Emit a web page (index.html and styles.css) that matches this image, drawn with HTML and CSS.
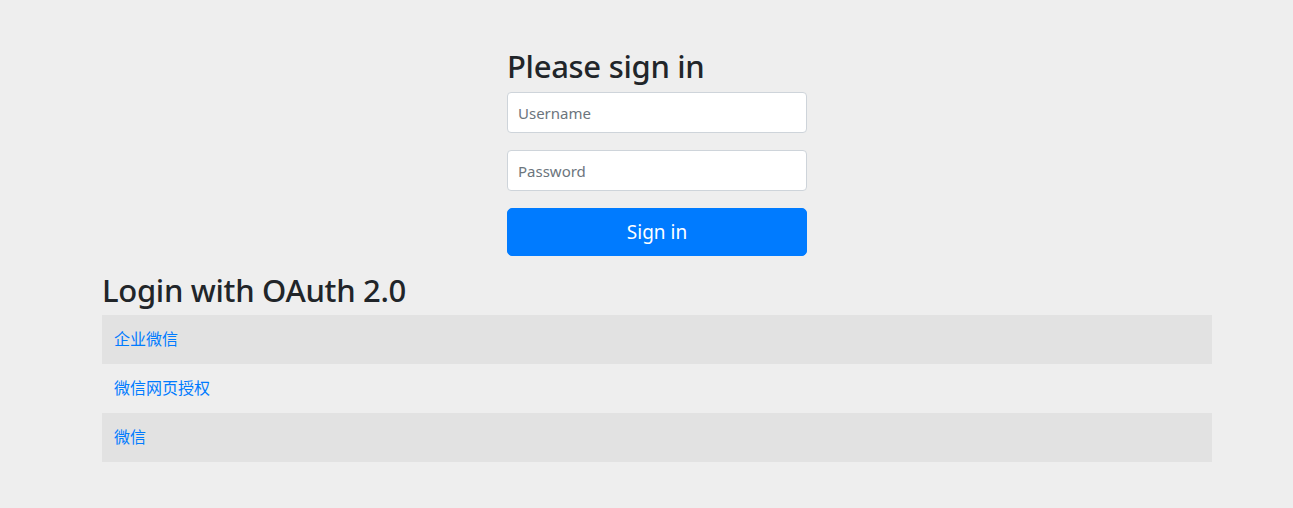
FILE: index.html
```
<!DOCTYPE html>
<html lang="en">
<head>
<meta charset="utf-8">
<title>Please sign in</title>
<link rel="stylesheet" href="styles.css">
</head>
<body>
<div class="page">
  <div class="container">
    <form class="form-signin">
      <h2 class="heading">Please sign in</h2>
      <p class="field"><input type="text" class="form-control" placeholder="Username"></p>
      <p class="field"><input type="password" class="form-control" placeholder="Password"></p>
      <button class="btn-primary" type="button">Sign in</button>
    </form>
    <h2 class="heading oauth-heading">Login with OAuth 2.0</h2>
    <div class="table">
      <div class="row odd"><a href="#">企业微信</a></div>
      <div class="row"><a href="#">微信网页授权</a></div>
      <div class="row odd"><a href="#">微信</a></div>
    </div>
  </div>
</div>
</body>
</html>
```
FILE: styles.css
```
html, body {
  margin: 0;
  padding: 0;
}
body {
  background: #eeeeee;
  color: #212529;
  font-family: "Noto Sans", "Noto Sans CJK SC", sans-serif;
  font-size: 16px;
}
.page {
  padding: 0 0 40px 21px;
}
.container {
  width: 1110px;
  margin: 0 auto;
}
.form-signin {
  width: 300px;
  margin: 0 auto;
  padding-top: 47px;
}
.heading {
  margin: 0 0 7px;
  font-size: 31px;
  letter-spacing: -0.3px;
  font-weight: 500;
  line-height: 38px;
}
.field {
  margin: 0 0 17px;
}
.form-control {
  display: block;
  box-sizing: border-box;
  width: 100%;
  height: 41px;
  padding: 0 10px;
  border: 1px solid #ced4da;
  border-radius: 4px;
  background: #fff;
  font-family: inherit;
  font-size: 15px;
  color: #495057;
  outline: none;
}
.form-control::placeholder {
  color: #6c757d;
}
.btn-primary {
  display: block;
  width: 100%;
  height: 48px;
  border: 1px solid #007bff;
  border-radius: 5px;
  background: #007bff;
  color: #fff;
  font-family: inherit;
  font-size: 19px;
  cursor: pointer;
}
.oauth-heading {
  margin-top: 15px;
  margin-bottom: 6px;
}
.table {
  display: flex;
  flex-direction: column;
}
.row {
  height: 49px;
  display: flex;
  align-items: center;
  padding: 0 12px 3px;
  box-sizing: border-box;
}
.row.odd {
  background: #e2e2e2;
}
.row a {
  color: #007bff;
  text-decoration: none;
  font-family: "Noto Sans CJK SC", sans-serif;
  font-size: 16px;
}
```
